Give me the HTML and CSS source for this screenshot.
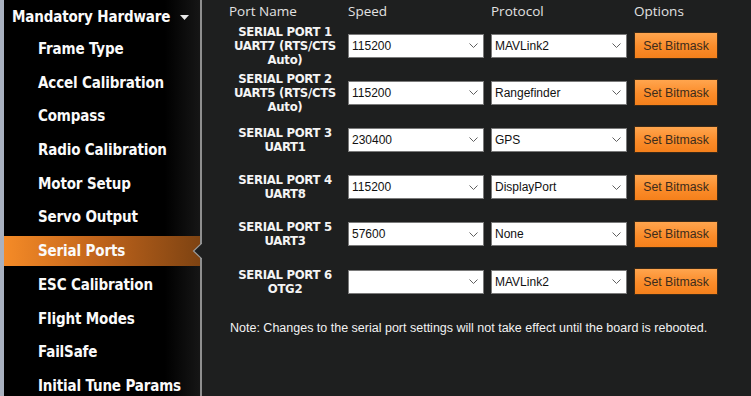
FILE: index.html
```html
<!DOCTYPE html>
<html>
<head>
<meta charset="utf-8">
<link rel="stylesheet" href="styles.css">
</head>
<body>
<div class="app">
  <div class="edge"></div>
  <nav class="sidebar">
    <div class="group-head">
      <span>Mandatory Hardware</span>
      <svg class="caret" width="9" height="5" viewBox="0 0 9 5"><polygon points="0,0 9,0 4.5,5" fill="#e8e8e8"/></svg>
    </div>
    <ul class="menu">
      <li class="item">Frame Type</li>
      <li class="item">Accel Calibration</li>
      <li class="item">Compass</li>
      <li class="item">Radio Calibration</li>
      <li class="item">Motor Setup</li>
      <li class="item">Servo Output</li>
      <li class="item selected">Serial Ports
        <svg class="notch" width="10" height="16" viewBox="0 0 10 16"><polygon points="10,0 1.5,8 10,16" fill="#1e1f1f"/><polyline points="10,0 1.5,8 10,16" fill="none" stroke="#9a9a9a" stroke-width="1.2"/></svg>
      </li>
      <li class="item">ESC Calibration</li>
      <li class="item">Flight Modes</li>
      <li class="item">FailSafe</li>
      <li class="item">Initial Tune Params</li>
    </ul>
  </nav>
  <div class="divider"></div>
  <main class="content">
    <div class="grid">
      <div class="hdr">Port Name</div>
      <div class="hdr">Speed</div>
      <div class="hdr">Protocol</div>
      <div class="hdr">Options</div>

      <div class="row">
        <div class="pname">SERIAL PORT 1<br>UART7 (RTS/CTS<br>Auto)</div>
        <div class="combo"><span>115200</span><svg class="chev" width="9" height="5" viewBox="0 0 9 5"><polyline points="0.5,0.5 4.5,4.5 8.5,0.5" fill="none" stroke="#606060" stroke-width="1"/></svg></div>
        <div class="combo"><span>MAVLink2</span><svg class="chev" width="9" height="5" viewBox="0 0 9 5"><polyline points="0.5,0.5 4.5,4.5 8.5,0.5" fill="none" stroke="#606060" stroke-width="1"/></svg></div>
        <button class="btn">Set Bitmask</button>
      </div>
      <div class="row">
        <div class="pname">SERIAL PORT 2<br>UART5 (RTS/CTS<br>Auto)</div>
        <div class="combo"><span>115200</span><svg class="chev" width="9" height="5" viewBox="0 0 9 5"><polyline points="0.5,0.5 4.5,4.5 8.5,0.5" fill="none" stroke="#606060" stroke-width="1"/></svg></div>
        <div class="combo"><span>Rangefinder</span><svg class="chev" width="9" height="5" viewBox="0 0 9 5"><polyline points="0.5,0.5 4.5,4.5 8.5,0.5" fill="none" stroke="#606060" stroke-width="1"/></svg></div>
        <button class="btn">Set Bitmask</button>
      </div>
      <div class="row">
        <div class="pname">SERIAL PORT 3<br>UART1</div>
        <div class="combo"><span>230400</span><svg class="chev" width="9" height="5" viewBox="0 0 9 5"><polyline points="0.5,0.5 4.5,4.5 8.5,0.5" fill="none" stroke="#606060" stroke-width="1"/></svg></div>
        <div class="combo"><span>GPS</span><svg class="chev" width="9" height="5" viewBox="0 0 9 5"><polyline points="0.5,0.5 4.5,4.5 8.5,0.5" fill="none" stroke="#606060" stroke-width="1"/></svg></div>
        <button class="btn">Set Bitmask</button>
      </div>
      <div class="row">
        <div class="pname">SERIAL PORT 4<br>UART8</div>
        <div class="combo"><span>115200</span><svg class="chev" width="9" height="5" viewBox="0 0 9 5"><polyline points="0.5,0.5 4.5,4.5 8.5,0.5" fill="none" stroke="#606060" stroke-width="1"/></svg></div>
        <div class="combo"><span>DisplayPort</span><svg class="chev" width="9" height="5" viewBox="0 0 9 5"><polyline points="0.5,0.5 4.5,4.5 8.5,0.5" fill="none" stroke="#606060" stroke-width="1"/></svg></div>
        <button class="btn">Set Bitmask</button>
      </div>
      <div class="row">
        <div class="pname">SERIAL PORT 5<br>UART3</div>
        <div class="combo"><span>57600</span><svg class="chev" width="9" height="5" viewBox="0 0 9 5"><polyline points="0.5,0.5 4.5,4.5 8.5,0.5" fill="none" stroke="#606060" stroke-width="1"/></svg></div>
        <div class="combo"><span>None</span><svg class="chev" width="9" height="5" viewBox="0 0 9 5"><polyline points="0.5,0.5 4.5,4.5 8.5,0.5" fill="none" stroke="#606060" stroke-width="1"/></svg></div>
        <button class="btn">Set Bitmask</button>
      </div>
      <div class="row">
        <div class="pname">SERIAL PORT 6<br>OTG2</div>
        <div class="combo"><span></span><svg class="chev" width="9" height="5" viewBox="0 0 9 5"><polyline points="0.5,0.5 4.5,4.5 8.5,0.5" fill="none" stroke="#606060" stroke-width="1"/></svg></div>
        <div class="combo"><span>MAVLink2</span><svg class="chev" width="9" height="5" viewBox="0 0 9 5"><polyline points="0.5,0.5 4.5,4.5 8.5,0.5" fill="none" stroke="#606060" stroke-width="1"/></svg></div>
        <button class="btn">Set Bitmask</button>
      </div>
    </div>
    <p class="note">Note: Changes to the serial port settings will not take effect until the board is rebooted.</p>
  </main>
</div>
</body>
</html>
```

FILE: styles.css
```css
html, body {
  margin: 0;
  padding: 0;
  width: 751px;
  height: 396px;
  overflow: hidden;
  background: #1e1f1f;
}

.app {
  display: flex;
  height: 396px;
}

.edge {
  width: 4px;
  background: #a9b1bf;
  flex: none;
}

.sidebar {
  width: 196px;
  flex: none;
  background: linear-gradient(to right, #000 0%, #000 82%, #161616 100%);
  font-family: "DejaVu Sans Condensed", "DejaVu Sans", sans-serif;
  font-stretch: condensed;
  font-weight: bold;
  color: #fafafa;
  font-size: 15px;
  letter-spacing: -0.15px;
}

.group-head {
  height: 34px;
  display: flex;
  align-items: center;
  padding-left: 8px;
  box-sizing: border-box;
}

.caret {
  margin-left: 10px;
  margin-top: 1px;
}

.menu {
  list-style: none;
  margin: 0;
  padding: 0;
  display: flex;
  flex-direction: column;
  gap: 3.7px;
}

.item {
  position: relative;
  height: 30px;
  display: flex;
  align-items: center;
  padding-left: 34px;
}

.item.selected {
  background: linear-gradient(to right, #f58b27 0%, #c4661c 45%, #7e4312 100%);
}

.notch {
  position: absolute;
  right: -2px;
  top: 7px;
}

.divider {
  width: 2px;
  flex: none;
  background: #8f8f8f;
}

.content {
  flex: 1;
  padding-left: 27px;
}

.grid {
  display: grid;
  grid-template-columns: 112px 136px 136px 84px;
  column-gap: 7px;
  grid-template-rows: 22px repeat(6, 47.2px);
}

.hdr {
  font-family: "Open Sans", sans-serif;
  font-size: 13.5px;
  color: #e2e2e2;
  line-height: 18px;
  padding-top: 2px;
}

.row {
  display: contents;
}

.row > * {
  align-self: center;
}

.pname {
  font-family: "DejaVu Sans Condensed", "DejaVu Sans", sans-serif;
  font-stretch: condensed;
  font-weight: bold;
  font-size: 13px;
  letter-spacing: -0.3px;
  line-height: 14px;
  color: #f4f4f4;
  text-align: center;
  white-space: nowrap;
}

.combo {
  height: 24px;
  box-sizing: border-box;
  background: #fff;
  border: 1px solid #7a7a7a;
  display: flex;
  align-items: center;
  justify-content: space-between;
  padding: 0 5px 0 3px;
  font-family: "Liberation Sans", sans-serif;
  font-size: 12px;
  color: #111;
}

.btn {
  height: 27px;
  box-sizing: border-box;
  border: 1px solid #3b2a18;
  background: linear-gradient(to bottom, #ffa54e 0%, #fb8c2a 55%, #f5801b 100%);
  font-family: "Liberation Sans", sans-serif;
  font-size: 12.3px;
  color: #3c2c1c;
  padding: 0;
  cursor: default;
}

.note {
  margin: 16px 0 0 1px;
  font-family: "Liberation Sans", sans-serif;
  font-size: 12.5px;
  color: #f2f2f2;
  line-height: 14px;
}
```
